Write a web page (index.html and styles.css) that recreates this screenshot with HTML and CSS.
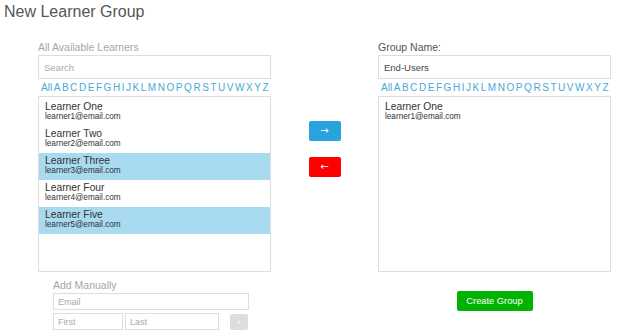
FILE: index.html
```html
<!DOCTYPE html>
<html>
<head>
    <title>New Learner Group</title>
    <link rel="stylesheet" href="styles.css">
</head>
<body>
    <h2>New Learner Group</h2>
    <div class="group-builder">
        <div class="column">
            <label class="col-label">All Available Learners</label>
            <input type="text" class="text-box" placeholder="Search">
            <div class="letters">
                <a>All</a><a>A</a><a>B</a><a>C</a><a>D</a><a>E</a><a>F</a><a>G</a><a>H</a><a>I</a><a>J</a><a>K</a><a>L</a><a>M</a><a>N</a><a>O</a><a>P</a><a>Q</a><a>R</a><a>S</a><a>T</a><a>U</a><a>V</a><a>W</a><a>X</a><a>Y</a><a>Z</a>
            </div>
            <ul class="learner-list">
                <li><span class="name">Learner One</span><span class="mail">learner1@email.com</span></li>
                <li><span class="name">Learner Two</span><span class="mail">learner2@email.com</span></li>
                <li class="selected"><span class="name">Learner Three</span><span class="mail">learner3@email.com</span></li>
                <li><span class="name">Learner Four</span><span class="mail">learner4@email.com</span></li>
                <li class="selected"><span class="name">Learner Five</span><span class="mail">learner5@email.com</span></li>
            </ul>
            <div class="manual">
                <label class="col-label">Add Manually</label>
                <input type="text" class="small-box email-box" placeholder="Email">
                <div class="name-row">
                    <input type="text" class="small-box first-box" placeholder="First">
                    <input type="text" class="small-box last-box" placeholder="Last">
                    <button class="add-btn">+</button>
                </div>
            </div>
        </div>

        <div class="move-buttons">
            <button class="move-btn move-right">&rarr;</button>
            <button class="move-btn move-left">&larr;</button>
        </div>

        <div class="column">
            <label class="col-label dark">Group Name:</label>
            <input type="text" class="text-box" value="End-Users">
            <div class="letters">
                <a>All</a><a>A</a><a>B</a><a>C</a><a>D</a><a>E</a><a>F</a><a>G</a><a>H</a><a>I</a><a>J</a><a>K</a><a>L</a><a>M</a><a>N</a><a>O</a><a>P</a><a>Q</a><a>R</a><a>S</a><a>T</a><a>U</a><a>V</a><a>W</a><a>X</a><a>Y</a><a>Z</a>
            </div>
            <ul class="learner-list">
                <li><span class="name">Learner One</span><span class="mail">learner1@email.com</span></li>
            </ul>
            <div class="create-row">
                <button class="create-btn">Create Group</button>
            </div>
        </div>
    </div>
</body>
</html>
```

FILE: styles.css
```css
body {
    font-family: "Liberation Sans", Arial, sans-serif;
    margin: 0;
    padding: 0 4px;
    background-color: #fff;
    color: #333;
}

h2 {
    font-size: 16px;
    font-weight: normal;
    color: #555;
    margin: 2px 0 0;
    line-height: 20px;
}

.group-builder {
    display: flex;
    margin: 18px 0 0 34px;
}

.column {
    width: 233px;
    display: flex;
    flex-direction: column;
}

.col-label {
    font-size: 10.5px;
    color: #a6a6a6;
    line-height: 14px;
}

.col-label.dark {
    color: #555;
}

.text-box {
    box-sizing: border-box;
    height: 24px;
    margin-top: 1px;
    padding: 0 5px;
    border: 1px solid #ddd;
    font-family: inherit;
    font-size: 9.5px;
    color: #444;
    outline: none;
}

.text-box::placeholder {
    color: #aaa;
}

.letters {
    display: flex;
    justify-content: space-between;
    padding: 0 2px 0 3px;
    height: 17px;
    line-height: 17px;
}

.letters a {
    font-size: 10px;
    color: #4aa8d8;
    cursor: pointer;
}

.learner-list {
    list-style: none;
    margin: 0;
    padding: 2px 0 0;
    box-sizing: border-box;
    height: 176px;
    border: 1px solid #ddd;
    overflow: hidden;
}

.learner-list li {
    height: 27px;
    box-sizing: border-box;
    padding: 2px 6px 0;
    display: flex;
    flex-direction: column;
}

.learner-list li.selected {
    background-color: #a8daf0;
}

.learner-list .name {
    font-size: 10.3px;
    line-height: 11px;
    color: #333;
}

.learner-list .mail {
    font-size: 8.2px;
    line-height: 9px;
    color: #333;
}

.manual {
    margin: 6px 0 0 15px;
    display: flex;
    flex-direction: column;
}

.small-box {
    box-sizing: border-box;
    height: 17px;
    border: 1px solid #ddd;
    padding: 0 4px;
    font-family: inherit;
    font-size: 9px;
    outline: none;
}

.small-box::placeholder {
    color: #aaa;
}

.email-box {
    width: 196px;
    margin-top: 1px;
}

.name-row {
    display: flex;
    align-items: flex-end;
    margin-top: 3px;
}

.first-box {
    width: 70px;
}

.last-box {
    width: 94px;
    margin-left: 2px;
}

.add-btn {
    width: 18px;
    height: 16px;
    margin-left: 11px;
    border: none;
    border-radius: 2px;
    background-color: #ddd;
    color: #fff;
    font-size: 8px;
    padding: 0;
}

.move-buttons {
    width: 107px;
    display: flex;
    flex-direction: column;
    align-items: center;
    padding-top: 81px;
    gap: 16px;
}

.move-btn {
    width: 32px;
    height: 20px;
    border: none;
    border-radius: 2px;
    color: #fff;
    font-family: "DejaVu Sans", sans-serif;
    font-size: 10px;
    line-height: 20px;
    padding: 0;
    cursor: pointer;
}

.move-right {
    background-color: #2aa2dc;
}

.move-left {
    background-color: #ff0000;
}

.create-row {
    display: flex;
    justify-content: center;
    margin-top: 19px;
}

.create-btn {
    width: 76px;
    height: 20px;
    border: none;
    border-radius: 2px;
    background-color: #00b300;
    color: #fff;
    font-family: inherit;
    font-size: 9.3px;
    padding: 0;
    cursor: pointer;
}
```
